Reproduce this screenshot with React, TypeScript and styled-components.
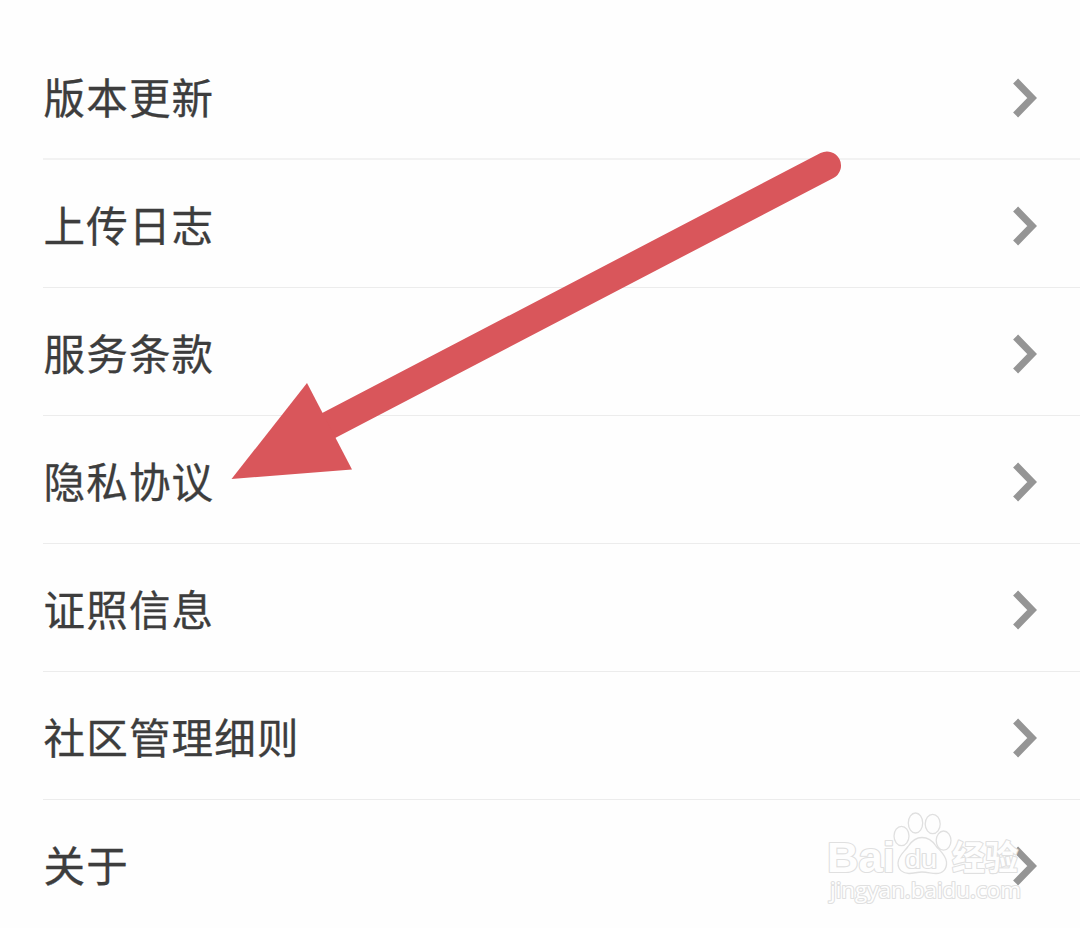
import React from "react";
import { createGlobalStyle, styled } from "styled-components";

const GlobalStyle = createGlobalStyle`
  * {
    box-sizing: border-box;
  }

  body {
    margin: 0;
    background-color: #fefefe;
    overflow: hidden;
  }
`;

const Page = styled.main`
  position: relative;
  width: 1080px;
  height: 928px;
  padding-top: 32px;
  overflow: hidden;
  background-color: #fefefe;
  font-family: "Noto Sans CJK SC", sans-serif;
`;

const List = styled.ul`
  list-style: none;
  margin: 0;
  padding: 0 0 0 43px;
`;

const Row = styled.li`
  display: flex;
  align-items: center;
  justify-content: space-between;
  height: 128px;
  padding: 5px 43px 0 0;
  border-bottom: 1px solid #ececec;

  &:first-child {
    border-bottom: 2px solid #f2f2f2;
  }

  &:last-child {
    border-bottom-color: transparent;
  }
`;

const Label = styled.span`
  padding: 0 0 4px 0.5px;
  color: #3d3d3d;
  font-size: 41.5px;
  line-height: 60px;
  letter-spacing: 1.2px;
  -webkit-text-stroke: 0.3px #3d3d3d;
`;

const Chevron = styled.svg`
  display: block;
  width: 24px;
  height: 40px;
  fill: none;
  stroke: #959595;
  stroke-width: 7px;
`;

const Arrow = styled.svg`
  position: absolute;
  left: 230px;
  top: 148px;
  width: 614px;
  height: 334px;
  color: #d9565b;
  pointer-events: none;
`;

const Watermark = styled.svg`
  position: absolute;
  left: 820px;
  top: 806px;
  width: 210px;
  height: 104px;
  pointer-events: none;
  fill: #fefefe;
  stroke: #e0e0e0;
  stroke-width: 1.3px;
`;

const MarkText = styled.text<{
  $size: number;
  $family: string;
  $weight?: number;
}>`
  font-family: "${({ $family }) => $family}", sans-serif;
  font-size: ${({ $size }) => $size}px;
  font-weight: ${({ $weight }) => $weight ?? 400};
  paint-order: stroke;
  stroke-width: 2.2px;
  stroke-linejoin: round;
`;

const items = [
  "版本更新",
  "上传日志",
  "服务条款",
  "隐私协议",
  "证照信息",
  "社区管理细则",
  "关于",
];

const SettingRow: React.FC<{ label: string }> = (props) => {
  return (
    <Row>
      <Label>{props.label}</Label>
      <Chevron viewBox="0 0 24 40">
        <path d="M2.6 3 L19.2 20 L2.6 37" />
      </Chevron>
    </Row>
  );
};

const BaiduMark: React.FC = () => {
  return (
    <Watermark viewBox="820 806 210 104">
      <ellipse cx="901.5" cy="836" rx="7.5" ry="9.6" />
      <ellipse cx="915.5" cy="823" rx="7.2" ry="10" />
      <ellipse cx="932.7" cy="824" rx="7.5" ry="9.6" />
      <ellipse cx="943.6" cy="840.6" rx="7.4" ry="9.6" />
      <path d="M922 837.5 C915 837.5 911 842 908 846.500 C904 852 898 856 898 863 C898 870 903 873.500 909 873.500 C914 873.500 917 872 922 872 C928 872 931 873.500 936 873.500 C943 873.500 947 869 946.500 862 C946 855 939 850 936 846 C933 841.500 929 837.500 922 837.500 Z" />
      <MarkText
        x="827"
        y="871.5"
        $size={42}
        $family="Liberation Sans"
        $weight={700}
        textLength="68"
        lengthAdjust="spacingAndGlyphs"
      >
        Bai
      </MarkText>
      <MarkText
        x="905"
        y="867.5"
        $size={25}
        $family="Liberation Sans"
        textLength="32"
        lengthAdjust="spacingAndGlyphs"
      >
        du
      </MarkText>
      <MarkText
        x="952"
        y="869.5"
        $size={34}
        $family="Noto Sans CJK SC"
        $weight={700}
        textLength="66"
        lengthAdjust="spacingAndGlyphs"
      >
        经验
      </MarkText>
      <MarkText
        x="830"
        y="898"
        $size={22.5}
        $family="Open Sans"
        textLength="191"
        lengthAdjust="spacingAndGlyphs"
      >
        jingyan.baidu.com
      </MarkText>
    </Watermark>
  );
};

const App: React.FC = () => {
  return (
    <>
      <GlobalStyle />
      <Page>
        <List>
          {items.map((item) => (
            <SettingRow key={item} label={item} />
          ))}
        </List>
        <Arrow viewBox="230 148 614 334">
          <path
            d="M827 165.5 L322 429"
            fill="none"
            stroke="currentColor"
            strokeWidth="28"
            strokeLinecap="round"
          />
          <path d="M231.5 479 L307 383 L352 469.5 Z" fill="currentColor" />
        </Arrow>
        <BaiduMark />
      </Page>
    </>
  );
};

export default App;
